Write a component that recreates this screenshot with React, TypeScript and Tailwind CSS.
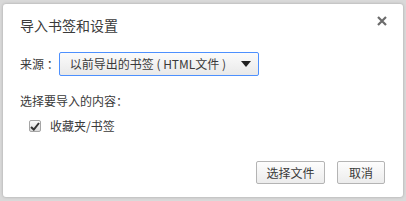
export default function App() {
  return (
    <div className="w-[406px] h-[201px] bg-[#d9d9d9] p-[3px] pt-[4px] pb-[4px] [font-family:'Noto_Sans_CJK_SC',sans-serif]">
      <div className="relative h-full bg-white rounded-[3px] shadow-[0_0_3px_rgba(0,0,0,0.25)] pl-[17px] pr-[18px] pt-[10px] flex flex-col text-[12px] text-[#3a3a3a]">
        <button className="absolute right-[14px] top-[10px] w-[14px] h-[14px] flex items-center justify-center">
          <svg width="10" height="10" viewBox="0 0 10 10">
            <path d="M1 1L9 9M9 1L1 9" stroke="#6b6b6b" strokeWidth="2.2" />
          </svg>
        </button>
        <h1 className="text-[14px] leading-[22px]">导入书签和设置</h1>
        <div className="flex items-center mt-[16px]">
          <span className="leading-[20px]">来源 ：</span>
          <div className="w-[200px] h-[24px] border border-[#4d90fe] rounded-[2px] bg-gradient-to-b from-[#fbfbfb] to-[#e9e9e9] flex items-center pl-[10px] pr-[7px]">
            <span className="flex-1 leading-[20px] whitespace-nowrap">以前导出的书签 ( HTML文件 )</span>
            <svg width="10" height="6" viewBox="0 0 10 6">
              <path d="M0 0H10L5 6Z" fill="#222" />
            </svg>
          </div>
        </div>
        <div className="mt-[15px] leading-[20px]">选择要导入的内容：</div>
        <div className="flex items-center mt-[5px] ml-[9px]">
          <div className="w-[12px] h-[12px] border border-[#a5a5a5] rounded-[2px] bg-gradient-to-b from-[#fafafa] to-[#dcdcdc] flex items-center justify-center">
            <svg width="10" height="9" viewBox="0 0 10 9">
              <path d="M1 5L3.8 7.6L9 1" stroke="#333" strokeWidth="2" fill="none" />
            </svg>
          </div>
          <span className="ml-[9px] leading-[20px]">收藏夹/书签</span>
        </div>
        <div className="flex justify-end gap-[12px] mt-auto mb-[13px]">
          <button className="w-[69px] h-[23px] border border-[#b4b4b4] rounded-[2px] bg-gradient-to-b from-[#fdfdfd] to-[#ececec] text-[12px] leading-[20px]">选择文件</button>
          <button className="w-[48px] h-[23px] border border-[#b4b4b4] rounded-[2px] bg-gradient-to-b from-[#fdfdfd] to-[#ececec] text-[12px] leading-[20px]">取消</button>
        </div>
      </div>
    </div>
  );
}
